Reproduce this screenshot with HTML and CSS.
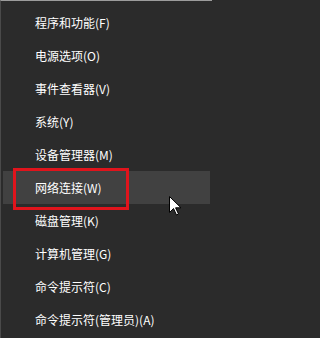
FILE: index.html
```html
<!DOCTYPE html>
<html lang="zh-CN">
<head>
<meta charset="utf-8">
<link rel="stylesheet" href="styles.css">
</head>
<body>
<div class="menu">
  <ul class="items">
    <li class="item">程序和功能(F)</li>
    <li class="item">电源选项(O)</li>
    <li class="item">事件查看器(V)</li>
    <li class="item">系统(Y)</li>
    <li class="item">设备管理器(M)</li>
    <li class="item hover">网络连接(W)</li>
    <li class="item">磁盘管理(K)</li>
    <li class="item">计算机管理(G)</li>
    <li class="item">命令提示符(C)</li>
    <li class="item">命令提示符(管理员)(A)</li>
  </ul>
  <div class="mark"></div>
  <svg class="cursor" width="13" height="20" viewBox="0 0 13 20">
    <path d="M0.5 0.5 L0.5 16.5 L4.5 12.5 L7.5 19 L9.5 18 L6.6 11.8 L12 11.8 Z" fill="#fff" stroke="#000" stroke-width="1" stroke-linejoin="miter"/>
  </svg>
</div>
</body>
</html>
```
FILE: styles.css
```css
html, body {
  margin: 0;
  padding: 0;
  background: #2b2b2b;
}
.menu {
  position: relative;
  width: 212px;
  height: 338px;
  box-sizing: border-box;
  background: #2b2b2b;
  border-top: 1px solid #9c9c9c;
  border-left: 1px solid #4a4a4a;
  overflow: hidden;
}
.items {
  list-style: none;
  margin: 0;
  padding: 5px 2px 0 2px;
}
.item {
  height: 33px;
  line-height: 33px;
  padding-left: 32px;
  color: #ffffff;
  font-family: "Noto Sans CJK SC", "Noto Sans", sans-serif;
  font-size: 12px;
  white-space: nowrap;
}
.item.hover {
  background: #414141;
}
.mark {
  position: absolute;
  left: 12px;
  top: 167px;
  width: 116px;
  height: 42px;
  box-sizing: border-box;
  border: 3px solid #e0141c;
}
.cursor {
  position: absolute;
  left: 168px;
  top: 195px;
}
```
